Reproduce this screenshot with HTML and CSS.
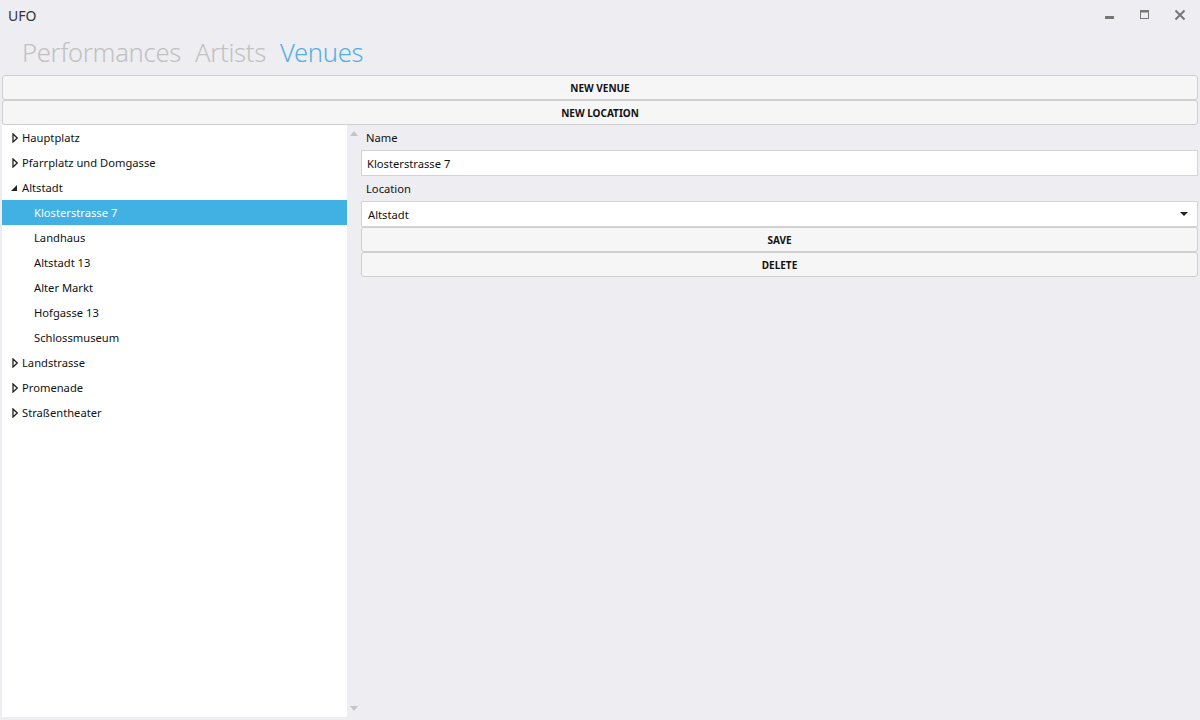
FILE: index.html
```html
<!DOCTYPE html>
<html>
<head>
<meta charset="utf-8">
<link rel="stylesheet" href="styles.css">
</head>
<body>
<div class="window">
  <div class="titlebar">
    <span class="app-title">UFO</span>
    <div class="controls">
      <svg class="ctl" width="12" height="12" viewBox="0 0 12 12"><rect x="1" y="7" width="9" height="3" fill="#777"/></svg>
      <svg class="ctl" width="12" height="12" viewBox="0 0 12 12"><rect x="1.5" y="1.5" width="8" height="8" fill="none" stroke="#777" stroke-width="1"/><rect x="1" y="1" width="9" height="2.5" fill="#777"/></svg>
      <svg class="ctl" width="12" height="12" viewBox="0 0 12 12"><path d="M1.5 1.5 L10.5 10.5 M10.5 1.5 L1.5 10.5" stroke="#777" stroke-width="2"/></svg>
    </div>
  </div>
  <nav class="tabs">
    <span class="tab">Performances</span>
    <span class="tab">Artists</span>
    <span class="tab active">Venues</span>
  </nav>
  <button class="btn">NEW VENUE</button>
  <button class="btn">NEW LOCATION</button>
  <div class="main">
    <div class="tree">
      <div class="node"><svg class="arrow" width="10" height="10" viewBox="0 0 10 10"><path d="M3 1 L7.3 5 L3 9 Z" fill="#fff" stroke="#222" stroke-width="1.3" stroke-linejoin="miter"/></svg>Hauptplatz</div>
      <div class="node"><svg class="arrow" width="10" height="10" viewBox="0 0 10 10"><path d="M3 1 L7.3 5 L3 9 Z" fill="#fff" stroke="#222" stroke-width="1.3"/></svg>Pfarrplatz und Domgasse</div>
      <div class="node"><svg class="arrow" width="10" height="10" viewBox="0 0 10 10"><path d="M1 8 L7 8 L7 2 Z" fill="#222"/></svg>Altstadt</div>
      <div class="node child selected">Klosterstrasse 7</div>
      <div class="node child">Landhaus</div>
      <div class="node child">Altstadt 13</div>
      <div class="node child">Alter Markt</div>
      <div class="node child">Hofgasse 13</div>
      <div class="node child">Schlossmuseum</div>
      <div class="node"><svg class="arrow" width="10" height="10" viewBox="0 0 10 10"><path d="M3 1 L7.3 5 L3 9 Z" fill="#fff" stroke="#222" stroke-width="1.3"/></svg>Landstrasse</div>
      <div class="node"><svg class="arrow" width="10" height="10" viewBox="0 0 10 10"><path d="M3 1 L7.3 5 L3 9 Z" fill="#fff" stroke="#222" stroke-width="1.3"/></svg>Promenade</div>
      <div class="node"><svg class="arrow" width="10" height="10" viewBox="0 0 10 10"><path d="M3 1 L7.3 5 L3 9 Z" fill="#fff" stroke="#222" stroke-width="1.3"/></svg>Straßentheater</div>
    </div>
    <div class="scrollbar">
      <span class="sb-up"></span>
      <span class="sb-down"></span>
    </div>
    <div class="form">
      <label class="lbl">Name</label>
      <div class="field">Klosterstrasse 7</div>
      <label class="lbl">Location</label>
      <div class="field combo"><span>Altstadt</span><span class="caret"></span></div>
      <button class="btn">SAVE</button>
      <button class="btn">DELETE</button>
    </div>
  </div>
</div>
</body>
</html>
```
FILE: styles.css
```css
* { box-sizing: border-box; }
html, body { margin: 0; padding: 0; }
body {
  width: 1200px;
  height: 720px;
  background: #eeedf2;
  font-family: "Noto Sans", "Open Sans", sans-serif;
  color: #111;
  overflow: hidden;
}
.window {
  display: flex;
  flex-direction: column;
  height: 720px;
  padding: 0 2px 3px 2px;
}
.titlebar {
  height: 33px;
  display: flex;
  align-items: center;
  justify-content: space-between;
  padding-left: 6px;
  flex: none;
}
.app-title {
  font-size: 14px;
  color: #333;
  margin-top: -3px;
}
.controls {
  display: flex;
  gap: 23px;
  margin-right: 12px;
  margin-top: -3px;
}
.tabs {
  height: 42px;
  display: flex;
  align-items: center;
  gap: 14px;
  padding-left: 20px;
  flex: none;
}
.tab {
  font-size: 25.6px;
  font-weight: 300;
  color: #c1c1c1;
  letter-spacing: -0.3px;
  margin-top: -3px;
}
.tab.active { color: #56afe1; }
.btn {
  display: block;
  width: 100%;
  height: 25px;
  background: #f6f6f6;
  border: 1px solid #cfcfcf;
  border-radius: 3px;
  font-family: "Noto Sans", sans-serif;
  font-weight: 700;
  font-size: 10px;
  color: #111;
  padding: 0;
  flex: none;
}
.main {
  flex: 1;
  display: flex;
  min-height: 0;
}
.tree {
  width: 345px;
  background: #fff;
  flex: none;
}
.node {
  height: 25px;
  display: flex;
  align-items: center;
  padding-left: 8px;
  font-size: 11.2px;
  color: #111;
}
.node.child { padding-left: 32px; }
.node.selected { background: #41b0e2; color: #fff; }
.arrow {
  flex: none;
  margin-right: 2px;
  margin-top: 0;
}
.scrollbar {
  width: 14px;
  flex: none;
  display: flex;
  flex-direction: column;
  justify-content: space-between;
  align-items: center;
  padding: 6px 0 6px 0;
}
.sb-up {
  width: 0; height: 0;
  border-left: 4.5px solid transparent;
  border-right: 4.5px solid transparent;
  border-bottom: 5px solid #c4c4c4;
}
.sb-down {
  width: 0; height: 0;
  border-left: 4.5px solid transparent;
  border-right: 4.5px solid transparent;
  border-top: 5px solid #c4c4c4;
}
.form {
  flex: 1;
  display: flex;
  flex-direction: column;
}
.lbl {
  height: 25px;
  display: flex;
  align-items: center;
  padding-left: 5px;
  font-size: 11.2px;
  color: #111;
}
.field {
  height: 26px;
  background: #fff;
  border: 1px solid #d4d4d4;
  display: flex;
  align-items: center;
  padding-left: 5px;
  font-size: 11.2px;
  color: #111;
}
.combo {
  justify-content: space-between;
  padding-left: 6px;
  padding-right: 9px;
}
.caret {
  width: 0; height: 0;
  border-left: 4px solid transparent;
  border-right: 4px solid transparent;
  border-top: 4px solid #222;
}
```
